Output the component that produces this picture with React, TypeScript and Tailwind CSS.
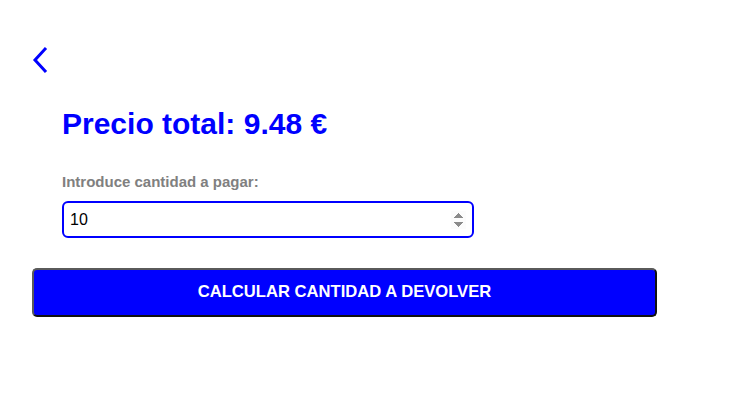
import { useState } from 'react'

export default function App() {
  const [amount, setAmount] = useState('10')

  return (
    <div className="min-h-[417px] w-full bg-white font-['Liberation_Sans',Arial,sans-serif]">
      <div className="pt-[46px] pl-[30px]">
        <button className="flex h-[28px] w-[20px] items-center justify-center text-[#0000ff]">
          <svg width="18" height="28" viewBox="0 0 18 28" fill="none">
            <path d="M14 3 L4 14 L14 25" stroke="#0000ff" strokeWidth="3" strokeLinecap="square" />
          </svg>
        </button>
      </div>

      <div className="pl-[62px] pt-[33px]">
        <h1 className="text-[30px] font-bold leading-[34px] text-[#0000ff]">Precio total: 9.48 €</h1>

        <label className="mt-[32px] block text-[15px] font-bold leading-[17px] text-[#808080]">
          Introduce cantidad a pagar:
        </label>
        <input
          type="number"
          autoFocus
          value={amount}
          onChange={(e) => setAmount(e.target.value)}
          className="mt-[11px] block h-[37px] w-[412px] rounded-[6px] border-2 border-[#0000ff] bg-white px-[6px] text-[16px] text-black outline-none"
        />
      </div>

      <div className="pl-[32px] pt-[30px]">
        <button className="h-[49px] w-[625px] rounded-[5px] border-2 border-t-[#5a5a5a] border-l-[#5a5a5a] border-r-[#111] border-b-[#111] bg-[#0000ff] text-[16.6px] font-bold uppercase text-white">
          Calcular cantidad a devolver
        </button>
      </div>
    </div>
  )
}
